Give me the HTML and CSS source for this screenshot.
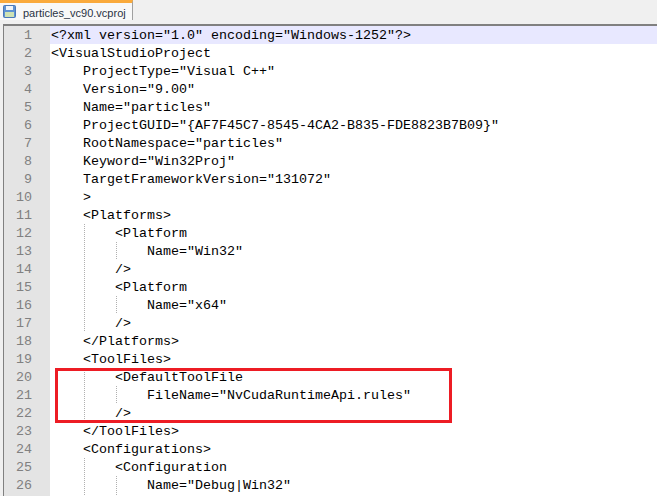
FILE: index.html
```html
<!DOCTYPE html>
<html lang="en">
<head>
<meta charset="utf-8">
<title>particles_vc90.vcproj</title>
<link rel="stylesheet" href="styles.css">
</head>
<body>
<div class="tabbar">
  <div class="tab">
    <svg class="save" width="13" height="13" viewBox="0 0 13 13"><rect x="0.5" y="0.5" width="12" height="12" rx="1" fill="#5f93d3" stroke="#4a78b8"/><rect x="3" y="1" width="7" height="4" fill="#eef4fa"/><rect x="2" y="7" width="9" height="5" fill="#cfe3b4"/></svg>
    <span class="tabname">particles_vc90.vcproj</span>
  </div>
</div>
<div class="editor">
  <div class="line current"><span class="num">1</span><span class="code"><span class="txt">&lt;?xml version="1.0" encoding="Windows-1252"?&gt;</span></span></div>
  <div class="line"><span class="num">2</span><span class="code"><span class="txt">&lt;VisualStudioProject</span></span></div>
  <div class="line"><span class="num">3</span><span class="code"><span class="in"></span><span class="txt">ProjectType="Visual C++"</span></span></div>
  <div class="line"><span class="num">4</span><span class="code"><span class="in"></span><span class="txt">Version="9.00"</span></span></div>
  <div class="line"><span class="num">5</span><span class="code"><span class="in"></span><span class="txt">Name="particles"</span></span></div>
  <div class="line"><span class="num">6</span><span class="code"><span class="in"></span><span class="txt">ProjectGUID="{AF7F45C7-8545-4CA2-B835-FDE8823B7B09}"</span></span></div>
  <div class="line"><span class="num">7</span><span class="code"><span class="in"></span><span class="txt">RootNamespace="particles"</span></span></div>
  <div class="line"><span class="num">8</span><span class="code"><span class="in"></span><span class="txt">Keyword="Win32Proj"</span></span></div>
  <div class="line"><span class="num">9</span><span class="code"><span class="in"></span><span class="txt">TargetFrameworkVersion="131072"</span></span></div>
  <div class="line"><span class="num">10</span><span class="code"><span class="in"></span><span class="txt">&gt;</span></span></div>
  <div class="line"><span class="num">11</span><span class="code"><span class="in"></span><span class="txt">&lt;Platforms&gt;</span></span></div>
  <div class="line"><span class="num">12</span><span class="code"><span class="in"></span><span class="in guide"></span><span class="txt">&lt;Platform</span></span></div>
  <div class="line"><span class="num">13</span><span class="code"><span class="in"></span><span class="in guide"></span><span class="in guide"></span><span class="txt">Name="Win32"</span></span></div>
  <div class="line"><span class="num">14</span><span class="code"><span class="in"></span><span class="in guide"></span><span class="txt">/&gt;</span></span></div>
  <div class="line"><span class="num">15</span><span class="code"><span class="in"></span><span class="in guide"></span><span class="txt">&lt;Platform</span></span></div>
  <div class="line"><span class="num">16</span><span class="code"><span class="in"></span><span class="in guide"></span><span class="in guide"></span><span class="txt">Name="x64"</span></span></div>
  <div class="line"><span class="num">17</span><span class="code"><span class="in"></span><span class="in guide"></span><span class="txt">/&gt;</span></span></div>
  <div class="line"><span class="num">18</span><span class="code"><span class="in"></span><span class="txt">&lt;/Platforms&gt;</span></span></div>
  <div class="line"><span class="num">19</span><span class="code"><span class="in"></span><span class="txt">&lt;ToolFiles&gt;</span></span></div>
  <div class="line"><span class="num">20</span><span class="code"><span class="in"></span><span class="in guide"></span><span class="txt">&lt;DefaultToolFile</span></span></div>
  <div class="line"><span class="num">21</span><span class="code"><span class="in"></span><span class="in guide"></span><span class="in guide"></span><span class="txt">FileName="NvCudaRuntimeApi.rules"</span></span></div>
  <div class="line"><span class="num">22</span><span class="code"><span class="in"></span><span class="in guide"></span><span class="txt">/&gt;</span></span></div>
  <div class="line"><span class="num">23</span><span class="code"><span class="in"></span><span class="txt">&lt;/ToolFiles&gt;</span></span></div>
  <div class="line"><span class="num">24</span><span class="code"><span class="in"></span><span class="txt">&lt;Configurations&gt;</span></span></div>
  <div class="line"><span class="num">25</span><span class="code"><span class="in"></span><span class="in guide"></span><span class="txt">&lt;Configuration</span></span></div>
  <div class="line"><span class="num">26</span><span class="code"><span class="in"></span><span class="in guide"></span><span class="in guide"></span><span class="txt">Name="Debug|Win32"</span></span></div>
  <div class="line"><span class="num"></span><span class="code"><span class="in"></span><span class="in guide"></span><span class="in guide"></span></span></div>
  <div class="mark"></div>
</div>
</body>
</html>
```
FILE: styles.css
```css
html, body {
  margin: 0;
  padding: 0;
  height: 100%;
  overflow: hidden;
  background: #f0f0f0;
}
body {
  display: flex;
  flex-direction: column;
}
.tabbar {
  height: 24px;
  flex: none;
  background: #f0f0f0;
  display: flex;
  align-items: flex-start;
}
.tab {
  width: 133px;
  height: 20px;
  box-sizing: border-box;
  background: #f8f8f8;
  border-top: 3px solid #faaa3c;
  border-right: 1px solid #a0a0a0;
  display: flex;
  align-items: center;
  gap: 7px;
  padding: 2px 0 0 3px;
}
.save {
  flex: none;
  margin-top: -2px;
}
.tabname {
  font: 11px "Liberation Sans", Arial, sans-serif;
  color: #2a3344;
  white-space: nowrap;
}
.editor {
  position: relative;
  flex: 1;
  min-height: 0;
  overflow: hidden;
  margin-left: 3px;
  background: #fff;
  border-top: 2px solid #808080;
  border-left: 1px solid #808080;
  font: 13.33px/20px "Liberation Mono", "Courier New", monospace;
  color: #000;
}
.line {
  display: flex;
  height: 18px;
  white-space: pre;
}
.num {
  flex: none;
  width: 46px;
  box-sizing: border-box;
  padding-right: 18px;
  background: #e4e4e4;
  color: #808080;
  text-align: right;
}
.code {
  flex: 1;
  display: flex;
  padding-left: 1px;
}
.current .code {
  background: #e8e8ff;
}
.in {
  flex: none;
  width: 32px;
  box-sizing: border-box;
}
.guide {
  background-image: linear-gradient(#b0b0b0 50%, transparent 50%);
  background-size: 1px 2px;
  background-repeat: repeat-y;
  background-position: 1px 0;
}
.mark {
  position: absolute;
  left: 51px;
  top: 342px;
  width: 397px;
  height: 55px;
  box-sizing: border-box;
  border: 3px solid #ed1c24;
}
```
